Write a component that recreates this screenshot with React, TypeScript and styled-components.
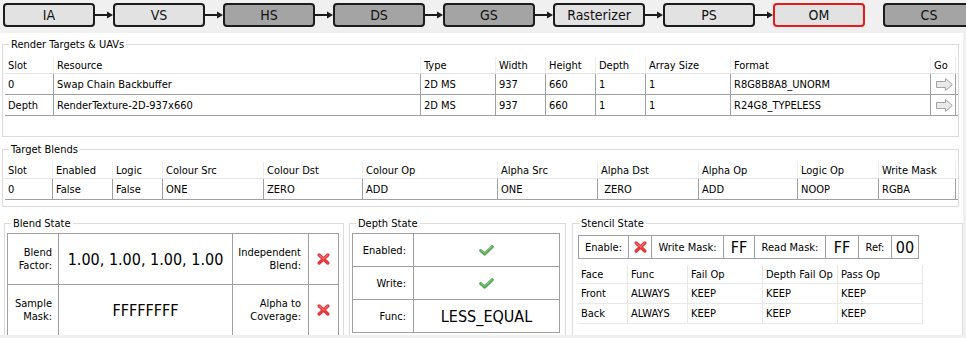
import React from 'react';
import styled, { createGlobalStyle } from 'styled-components';

const GlobalStyle = createGlobalStyle`
  html, body {
    margin: 0;
    padding: 0;
    background: #f0f0f0;
  }
  body {
    width: 966px;
    height: 338px;
    overflow: hidden;
    font-family: "DejaVu Sans Condensed", "DejaVu Sans", sans-serif;
    font-stretch: condensed;
    font-size: 11px;
    color: #000;
  }
  * {
    box-sizing: border-box;
  }
`;

/* ---------- pipeline bar ---------- */

const PipelineBar = styled.div`
  display: flex;
  align-items: center;
  width: 966px;
  height: 33px;
  padding: 3px 0 6px 3px;
  overflow: hidden;
`;

const Stage = styled.div<{ $active: boolean; $selected?: boolean }>`
  flex: 0 0 92px;
  height: 24px;
  border: 2px solid ${(p) => (p.$selected ? '#e41b1b' : '#1c1c1c')};
  border-radius: 4px;
  background: ${(p) => (p.$active ? '#e2e2e2' : '#a4a4a4')};
  display: flex;
  align-items: center;
  justify-content: center;
  font-size: 14px;
  color: #111;
`;

const Connector = styled.div`
  flex: 0 0 18px;
  height: 24px;
  display: flex;
  align-items: center;
`;

const Spacer = styled.div`
  flex: 0 0 18px;
`;

const Arrow = () => (
  <Connector>
    <svg width="18" height="24" viewBox="0 0 18 24">
      <line x1="0" y1="12" x2="13" y2="12" stroke="#1c1c1c" strokeWidth="2" />
      <polygon points="12,8.5 18,12 12,15.5" fill="#1c1c1c" />
    </svg>
  </Connector>
);

/* ---------- panel and group boxes ---------- */

const Panel = styled.div`
  width: 963px;
  height: 302px;
  background: #fff;
  overflow: hidden;
  padding-top: 11px;
`;

const Group = styled.div<{ $h: number; $w?: number }>`
  border: 1px solid #dcdcdc;
  height: ${(p) => p.$h}px;
  ${(p) => (p.$w ? `width: ${p.$w}px; flex: 0 0 ${p.$w}px;` : '')}
`;

const TopGroup = styled(Group)`
  margin: 0 4px 0 2px;
  padding-left: 2px;
`;

const BlendsGroup = styled(TopGroup)`
  margin-top: 12px;
`;

const GroupTitle = styled.div<{ $indent?: number }>`
  width: max-content;
  height: 13px;
  line-height: 13px;
  margin: -7px 0 0 ${(p) => p.$indent ?? 4}px;
  padding: 0 2px;
  background: #fff;
`;

/* ---------- list tables ---------- */

const Table = styled.div`
  margin-top: 6px;
`;

const TableRow = styled.div<{ $cols: string; $h: number; $header?: boolean; $line: string }>`
  display: grid;
  grid-template-columns: ${(p) => p.$cols};
  height: ${(p) => p.$h}px;
  border-bottom: 1px solid ${(p) => (p.$header ? '#e4e4e4' : p.$line)};
`;

const Cell = styled.div<{ $line: string; $center?: boolean }>`
  border-right: 1px solid ${(p) => p.$line};
  padding-left: 3px;
  display: flex;
  align-items: center;
  justify-content: ${(p) => (p.$center ? 'center' : 'flex-start')};
  white-space: pre;
  overflow: hidden;
`;

const GoIcon = () => (
  <svg width="17" height="13" viewBox="0 0 17 13">
    <polygon
      points="0.5,3.5 9.5,3.5 9.5,0.5 16.3,6.5 9.5,12.5 9.5,9.5 0.5,9.5"
      fill="#e9e9e9"
      stroke="#a3a3a3"
      strokeWidth="1"
      strokeLinejoin="round"
    />
  </svg>
);

const CrossIcon = () => (
  <svg width="13" height="12" viewBox="0 0 13 12">
    <path d="M2.2 2 L10.8 10 M10.8 2 L2.2 10" stroke="#e23a3a" strokeWidth="3.4" strokeLinecap="round" />
    <path d="M2.4 2.1 L6.5 5.9 M10.6 2.1 L6.5 5.9" stroke="#f58a8a" strokeWidth="1" strokeLinecap="round" />
  </svg>
);

const CheckIcon = () => (
  <svg width="15" height="11" viewBox="0 0 15 11">
    <path d="M1.8 5.6 L5.6 9 L13.2 1.8" fill="none" stroke="#58a858" strokeWidth="3.2" strokeLinecap="round" strokeLinejoin="round" />
    <path d="M2.4 5.4 L5.6 8.2 L12.6 1.8" fill="none" stroke="#8fd08f" strokeWidth="0.9" strokeLinecap="round" />
  </svg>
);

/* ---------- state grids ---------- */

const BottomRow = styled.div`
  display: flex;
  margin-top: 16px;
  padding-left: 4px;
`;

const BlendGroup = styled(Group)`
  padding-left: 2px;
  margin-right: 5px;
`;

const DepthGroup = styled(Group)`
  padding-left: 2px;
  margin-right: 6px;
`;

const StencilGroup = styled(Group)`
  padding-left: 5px;
`;

const StateGrid = styled.div<{ $cols: string; $rows: string; $top: number }>`
  display: grid;
  grid-template-columns: ${(p) => p.$cols};
  grid-template-rows: ${(p) => p.$rows};
  width: max-content;
  margin-top: ${(p) => p.$top}px;
  border-top: 1px solid #a0a0a0;
  border-left: 1px solid #a0a0a0;
`;

const Label = styled.div<{ $align?: string; $pad?: number }>`
  border-right: 1px solid #a0a0a0;
  border-bottom: 1px solid #a0a0a0;
  display: flex;
  align-items: center;
  justify-content: ${(p) => p.$align || 'flex-end'};
  text-align: right;
  line-height: 13px;
  padding-right: ${(p) => p.$pad ?? 6}px;
  white-space: nowrap;
`;

const Value = styled.div`
  border-right: 1px solid #a0a0a0;
  border-bottom: 1px solid #a0a0a0;
  display: flex;
  align-items: center;
  justify-content: center;
  font-size: 16px;
  white-space: nowrap;
`;

const StencilTable = styled.div`
  margin-top: 6px;
  width: 345px;
`;

/* ---------- data ---------- */

const stages = [
  { name: 'IA', active: true },
  { name: 'VS', active: true },
  { name: 'HS', active: false },
  { name: 'DS', active: false },
  { name: 'GS', active: false },
  { name: 'Rasterizer', active: true },
  { name: 'PS', active: true },
  { name: 'OM', active: true, selected: true },
];

const rtCols = '49px 367px 75px 50px 50px 50px 85px 200px 25px';
const rtHeader = ['Slot', 'Resource', 'Type', 'Width', 'Height', 'Depth', 'Array Size', 'Format', 'Go'];
const rtRows = [
  ['0', 'Swap Chain Backbuffer', '2D MS', '937', '660', '1', '1', 'R8G8B8A8_UNORM'],
  ['Depth', 'RenderTexture-2D-937x660', '2D MS', '937', '660', '1', '1', 'R24G8_TYPELESS'],
];

const tbCols = '48px 60px 50px 101px 99px 135px 100px 101px 99px 81px 77px';
const tbHeader = [
  'Slot', 'Enabled', 'Logic', 'Colour Src', 'Colour Dst', 'Colour Op',
  'Alpha Src', 'Alpha Dst', 'Alpha Op', 'Logic Op', 'Write Mask',
];
const tbRows = [['0', 'False', 'False', 'ONE', 'ZERO', 'ADD', 'ONE', ' ZERO', 'ADD', 'NOOP', 'RGBA']];

const stCols = '50px 60px 75px 75px 85px';
const stHeader = ['Face', 'Func', 'Fail Op', 'Depth Fail Op', 'Pass Op'];
const stRows = [
  ['Front', 'ALWAYS', 'KEEP', 'KEEP', 'KEEP'],
  ['Back', 'ALWAYS', 'KEEP', 'KEEP', 'KEEP'],
];

const GRID = '#a0a0a0';
const FAINT = '#e8e8e8';

export default function App() {
  return (
    <>
      <GlobalStyle />
      <PipelineBar>
        {stages.map((s, i) => (
          <React.Fragment key={s.name}>
            {i > 0 && <Arrow />}
            <Stage $active={s.active} $selected={s.selected}>{s.name}</Stage>
          </React.Fragment>
        ))}
        <Spacer />
        <Stage $active={false}>CS</Stage>
      </PipelineBar>

      <Panel>
        <TopGroup $h={93}>
          <GroupTitle>Render Targets &amp; UAVs</GroupTitle>
          <Table>
            <TableRow $cols={rtCols} $h={17} $header $line={GRID}>
              {rtHeader.map((h) => (
                <Cell key={h} $line="#ececec">{h}</Cell>
              ))}
            </TableRow>
            {rtRows.map((r) => (
              <TableRow key={r[0]} $cols={rtCols} $h={21} $line={GRID}>
                {r.map((c, i) => (
                  <Cell key={i} $line={GRID}>{c}</Cell>
                ))}
                <Cell $line={GRID} $center>
                  <GoIcon />
                </Cell>
              </TableRow>
            ))}
          </Table>
        </TopGroup>

        <BlendsGroup $h={58}>
          <GroupTitle>Target Blends</GroupTitle>
          <Table>
            <TableRow $cols={tbCols} $h={17} $header $line={GRID}>
              {tbHeader.map((h) => (
                <Cell key={h} $line="#ececec">{h}</Cell>
              ))}
            </TableRow>
            {tbRows.map((r) => (
              <TableRow key={r[0]} $cols={tbCols} $h={21} $line={GRID}>
                {r.map((c, i) => (
                  <Cell key={i} $line={GRID}>{c}</Cell>
                ))}
              </TableRow>
            ))}
          </Table>
        </BlendsGroup>

        <BottomRow>
          <BlendGroup $h={130} $w={340}>
            <GroupTitle>Blend State</GroupTitle>
            <StateGrid $cols="51px 174px 76px 30px" $rows="51px 51px" $top={3}>
              <Label>Blend<br />Factor:</Label>
              <Value>1.00, 1.00, 1.00, 1.00</Value>
              <Label $pad={7}>Independent<br />Blend:</Label>
              <Value><CrossIcon /></Value>
              <Label>Sample<br />Mask:</Label>
              <Value>FFFFFFFF</Value>
              <Label $pad={7}>Alpha to<br />Coverage:</Label>
              <Value><CrossIcon /></Value>
            </StateGrid>
          </BlendGroup>

          <DepthGroup $h={130} $w={217}>
            <GroupTitle>Depth State</GroupTitle>
            <StateGrid $cols="61px 146px" $rows="33px 33px 33px" $top={3}>
              <Label $pad={7}>Enabled:</Label>
              <Value><CheckIcon /></Value>
              <Label $pad={7}>Write:</Label>
              <Value><CheckIcon /></Value>
              <Label $pad={7}>Func:</Label>
              <Value>LESS_EQUAL</Value>
            </StateGrid>
          </DepthGroup>

          <StencilGroup $h={130} $w={391}>
            <GroupTitle $indent={1}>Stencil State</GroupTitle>
            <StateGrid $cols="50px 23px 72px 31px 71px 33px 33px 27px" $rows="23px" $top={5}>
              <Label $align="center" $pad={0}>Enable:</Label>
              <Value><CrossIcon /></Value>
              <Label $align="center" $pad={0}>Write Mask:</Label>
              <Value>FF</Value>
              <Label $align="center" $pad={0}>Read Mask:</Label>
              <Value>FF</Value>
              <Label $align="center" $pad={0}>Ref:</Label>
              <Value>00</Value>
            </StateGrid>
            <StencilTable>
              <TableRow $cols={stCols} $h={19} $line={FAINT}>
                {stHeader.map((h) => (
                  <Cell key={h} $line={FAINT}>{h}</Cell>
                ))}
              </TableRow>
              {stRows.map((r) => (
                <TableRow key={r[0]} $cols={stCols} $h={20} $line={FAINT}>
                  {r.map((c, i) => (
                    <Cell key={i} $line={FAINT}>{c}</Cell>
                  ))}
                </TableRow>
              ))}
            </StencilTable>
          </StencilGroup>
        </BottomRow>
      </Panel>
    </>
  );
}
